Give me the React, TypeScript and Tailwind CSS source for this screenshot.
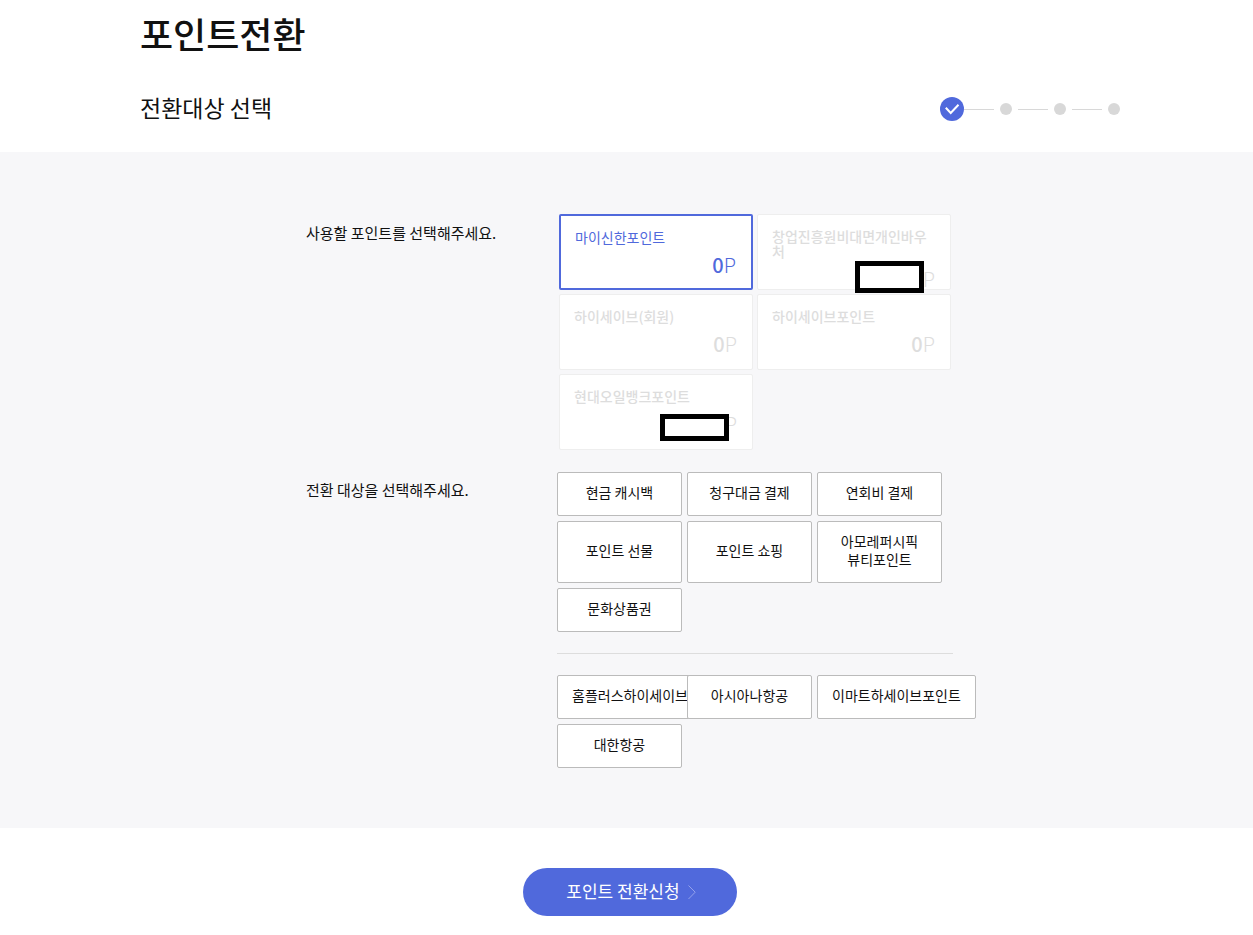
import { useState } from 'react';

const pointCards = [
  { name: '마이신한포인트', amount: '0', disabled: false, mask: '' },
  { name: '창업진흥원비대면개인바우처', amount: '', disabled: true, mask: 'left-[97px] top-[46px] h-8' },
  { name: '하이세이브(회원)', amount: '0', disabled: true, mask: '' },
  { name: '하이세이브포인트', amount: '0', disabled: true, mask: '' },
  { name: '현대오일뱅크포인트', amount: '', disabled: true, mask: 'left-[100px] top-[39px] h-[27px]' },
];

const mainTargets = [
  '현금 캐시백',
  '청구대금 결제',
  '연회비 결제',
  '포인트 선물',
  '포인트 쇼핑',
  '아모레퍼시픽\n뷰티포인트',
  '문화상품권',
];

const partnerTargets = ['홈플러스하이세이브', '아시아나항공', '이마트하세이브포인트', '대한항공'];

function Steps() {
  return (
    <ol className="flex items-center">
      <li className="flex h-6 w-6 items-center justify-center rounded-full bg-[#5069dc]">
        <svg className="h-6 w-6" viewBox="0 0 24 24" fill="none" stroke="white" strokeWidth={2}>
          <path d="M5.8 10.8l4.9 5.2 7.8-8.2" />
        </svg>
      </li>
      {[1, 2, 3].map((step) => (
        <li key={step} className="flex items-center">
          <span className={step === 1 ? 'h-px w-[30px] bg-[#d8d8d8]' : 'ml-1.5 h-px w-[30px] bg-[#d8d8d8]'} />
          <span className="ml-1.5 h-3 w-3 rounded-full bg-[#d8d8d8]" />
        </li>
      ))}
    </ol>
  );
}

function TargetGrid({ items }: { items: string[] }) {
  const [selected, setSelected] = useState('');

  return (
    <ul className="grid grid-cols-[repeat(3,125px)] gap-[5px]">
      {items.map((item) => (
        <li key={item} className="flex">
          <button
            type="button"
            aria-pressed={selected === item}
            onClick={() => setSelected(item)}
            className="min-w-full shrink-0 whitespace-pre rounded-xs border border-[#bbb] bg-white px-3.5 pb-3.5 pt-2.5 text-center text-sm leading-[18px] text-[#111]"
          >
            {item}
          </button>
        </li>
      ))}
    </ul>
  );
}

export default function App() {
  const [point, setPoint] = useState('마이신한포인트');

  return (
    <div className="min-h-screen bg-white font-['Noto_Sans_CJK_KR',sans-serif] text-[#111]">
      <header className="mx-auto max-w-[987px] pb-[25px] pl-[7px] pt-1.5">
        <h1 className="text-4xl font-medium leading-[54px]">포인트전환</h1>
        <div className="mt-[30px] flex items-end justify-between">
          <h2 className="pb-0.5 text-[23px] leading-[35px]">전환대상 선택</h2>
          <div className="pb-1.5">
            <Steps />
          </div>
        </div>
      </header>

      <main className="bg-[#f7f7f9] py-[60px]">
        <div className="mx-auto max-w-[987px] pl-[173px]">
          <section className="flex">
            <h3 className="w-[251px] shrink-0 pt-[9px] text-[15px] leading-6">사용할 포인트를 선택해주세요.</h3>
            <ul className="grid w-[396px] grid-cols-2 gap-1 p-0.5">
              {pointCards.map((card) => (
                <li key={card.name}>
                  <button
                    type="button"
                    disabled={card.disabled}
                    aria-pressed={point === card.name}
                    onClick={() => setPoint(card.name)}
                    className={
                      point === card.name
                        ? 'relative flex h-[76px] w-full flex-col rounded-xs border-2 border-[#5069dc] bg-white pl-3.5 pr-[15px] pt-3.5 text-left text-[#5069dc]'
                        : 'relative flex h-[76px] w-full flex-col rounded-xs border border-[#eee] bg-white pl-3.5 pr-[15px] pt-3.5 text-left font-medium text-[#ddd]'
                    }
                  >
                    <span className="break-all text-sm leading-[15px]">{card.name}</span>
                    <span className="mt-2 self-end text-xl leading-6">
                      <span className="font-medium">{card.amount}</span>
                      <span className="font-light">P</span>
                    </span>
                    {card.mask && (
                      <span className={`absolute w-[69px] border-5 border-black bg-white ${card.mask}`} />
                    )}
                  </button>
                </li>
              ))}
            </ul>
          </section>

          <section className="mt-5 flex">
            <h3 className="w-[251px] shrink-0 pt-1.5 text-[15px] leading-6">전환 대상을 선택해주세요.</h3>
            <div className="w-[396px]">
              <TargetGrid items={mainTargets} />
              <hr className="my-[21px] border-[#ddd]" />
              <TargetGrid items={partnerTargets} />
            </div>
          </section>
        </div>
      </main>

      <footer className="mx-auto flex max-w-[987px] justify-center pl-[7px] pt-10">
        <button
          type="button"
          className="flex h-12 items-center gap-2 rounded-full bg-[#5069dc] pl-[43px] pr-[41px] text-[17px] text-white"
        >
          <span className="pb-0.5">포인트 전환신청</span>
          <svg className="h-4 w-2" viewBox="0 0 8 16" fill="none" stroke="#94a2eb">
            <path d="M0.5 1.5L7.2 8.2L0.5 15" />
          </svg>
        </button>
      </footer>
    </div>
  );
}
